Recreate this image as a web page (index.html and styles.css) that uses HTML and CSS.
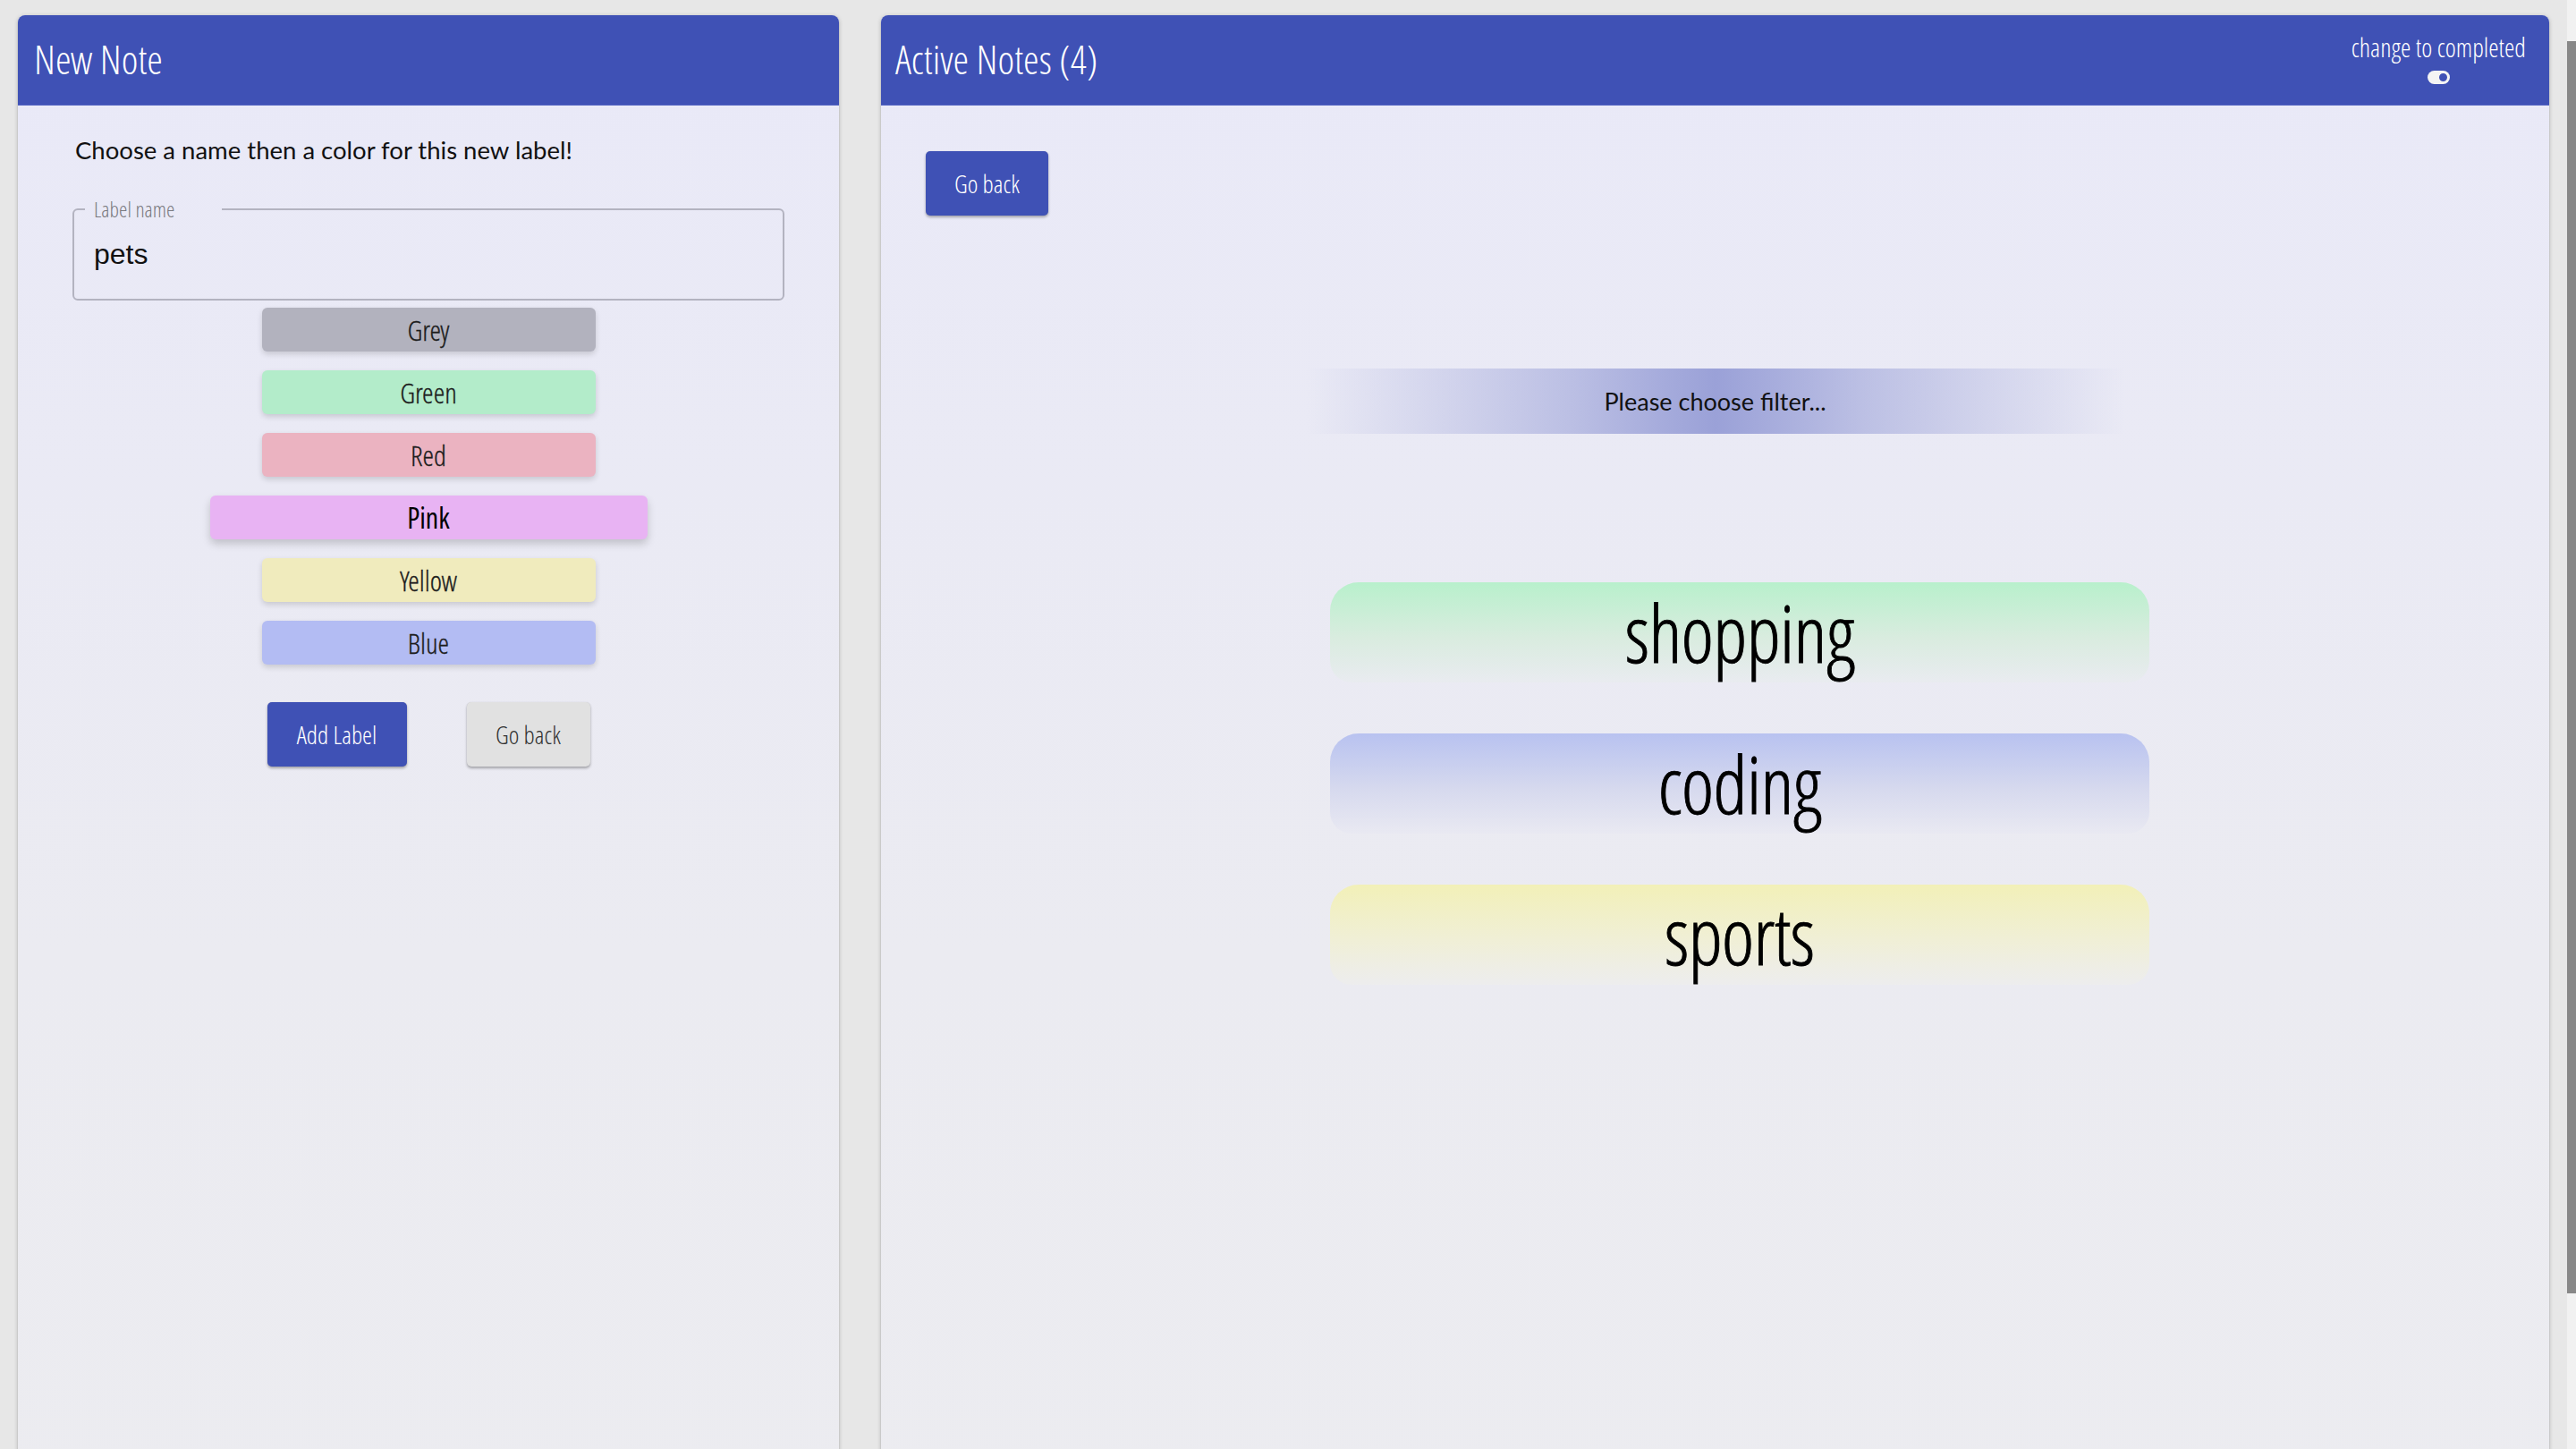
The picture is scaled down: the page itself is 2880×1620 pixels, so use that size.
FILE: index.html
```html
<!DOCTYPE html>
<html lang="en">
<head>
<meta charset="utf-8">
<title>Notes</title>
<link rel="stylesheet" href="styles.css">
</head>
<body>
<div class="screen">
  <div class="viewport">
    <div class="page">
      <section class="card card-left">
        <header class="card-head">
          <h1 class="card-title">New Note</h1>
        </header>
        <div class="left-body">
          <p class="intro">Choose a name then a color for this new label!</p>
          <fieldset class="field">
            <legend class="field-label">Label name</legend>
            <div class="field-value">pets</div>
          </fieldset>
          <div class="colors">
            <button class="color c-grey">Grey</button>
            <button class="color c-green">Green</button>
            <button class="color c-red">Red</button>
            <button class="color c-pink selected">Pink</button>
            <button class="color c-yellow">Yellow</button>
            <button class="color c-blue">Blue</button>
          </div>
          <div class="actions">
            <button class="btn btn-primary btn-add">Add Label</button>
            <button class="btn btn-light btn-back">Go back</button>
          </div>
        </div>
      </section>
      <section class="card card-right">
        <header class="card-head head-right">
          <h1 class="card-title">Active Notes (4)</h1>
          <div class="toggle-box">
            <span class="toggle-text">change to completed</span>
            <span class="switch"><span class="knob"></span></span>
          </div>
        </header>
        <div class="right-body">
          <button class="btn btn-primary btn-back2">Go back</button>
          <div class="filter">Please choose filter...</div>
          <ul class="labels">
            <li class="label l-green">shopping</li>
            <li class="label l-blue">coding</li>
            <li class="label l-yellow">sports</li>
          </ul>
        </div>
      </section>
    </div>
  </div>
  <div class="scrollbar">
    <div class="sb-track sb-start"></div>
    <div class="sb-thumb"></div>
    <div class="sb-track sb-end"></div>
  </div>
</div>
</body>
</html>
```

FILE: styles.css
```css
html, body {
  margin: 0;
  padding: 0;
  height: 100%;
  overflow: hidden;
}
body {
  background: #e7e7e7;
  font-family: "Lato", "Open Sans", sans-serif;
}
.screen {
  display: flex;
  height: 100vh;
}
.viewport {
  flex: 1;
  overflow: hidden;
}
.scrollbar {
  width: 10px;
  display: flex;
  flex-direction: column;
  background: #f1f1f1;
}
.sb-start { height: 46px; }
.sb-thumb { height: 1400px; background: #888888; }
.sb-end { flex: 1; }

.page {
  display: grid;
  grid-template-columns: 918px 1fr;
  column-gap: 47px;
  padding: 17px 20px 0 20px;
  height: 1768px;
  box-sizing: border-box;
}
.card {
  background: linear-gradient(#e9e9f8, #ebebf1 60%, #ececf0);
  border-radius: 8px 8px 0 0;
  box-shadow: 0 1px 5px rgba(0,0,0,0.22), 0 2px 2px rgba(0,0,0,0.12);
}
.card-title, .toggle-text, .field-label, .btn, .label, .color {
  font-family: "Open Sans Condensed Light", "Open Sans", sans-serif;
  font-stretch: 75%;
  font-weight: 300;
}
.card-head {
  height: 101px;
  background: #3f51b5;
  border-radius: 8px 8px 0 0;
  display: flex;
  align-items: center;
  padding: 0 18px;
  box-sizing: border-box;
  border-bottom: 1px solid #5566c2;
}
.card-title {
  margin: 0;
  color: #ffffff;
  font-size: 45px;
  line-height: 1.2;
  padding-bottom: 2px;
}
.head-right {
  justify-content: space-between;
  padding: 0 26px 0 16px;
}
.toggle-box {
  align-self: flex-start;
  margin-top: 19px;
  display: flex;
  flex-direction: column;
  align-items: center;
  gap: 9px;
}
.toggle-text {
  color: #ffffff;
  font-size: 29px;
  line-height: 34px;
}
.switch {
  width: 25px;
  height: 15px;
  border-radius: 8px;
  background: #f4f4f4;
  display: flex;
  justify-content: flex-end;
  align-items: center;
  padding: 0 1px;
  box-sizing: border-box;
}
.knob {
  width: 13px;
  height: 13px;
  border-radius: 50%;
  background: #3f51b5;
  border: 2px solid #f4f4f4;
  box-sizing: border-box;
}

/* left body */
.left-body {
  padding: 33px 61px 0 61px;
}
.intro {
  margin: 0 0 37px 3px;
  font-size: 27.5px;
  line-height: 33px;
  color: #111111;
}
.field {
  margin: 0;
  padding: 19px 22px 31px 22px;
  border: 2px solid #b3b3c0;
  border-radius: 6px;
}
.field-label {
  margin-left: -10px;
  padding: 0 10px;
  width: 153px;
  box-sizing: border-box;
  font-size: 24px;
  line-height: 26px;
  color: #7a7a80;
}
.field-value {
  font-family: "Liberation Sans", Arial, sans-serif;
  font-size: 32px;
  color: #111111;
}
.colors {
  margin-top: 8px;
  display: flex;
  flex-direction: column;
  align-items: center;
  gap: 21px;
}
.color {
  width: 373px;
  height: 49px;
  border: none;
  border-radius: 6px;
  font-size: 32px;
  color: #1c1c1c;
  padding: 0;
  line-height: 49px;
  -webkit-text-stroke: 0.3px #1c1c1c;
  box-shadow: 0 3px 6px rgba(0,0,0,0.15);
}
.color.selected {
  width: 489px;
  font-family: "Open Sans", sans-serif;
  font-stretch: 75%;
  font-weight: 400;
  color: #000000;
  -webkit-text-stroke: 0;
  box-shadow: 0 5px 10px rgba(0,0,0,0.18);
}
.c-grey { background: #b2b2be; }
.c-green { background: #b3ecca; }
.c-red { background: #ebb3c1; }
.c-pink { background: #e8b3f3; }
.c-yellow { background: #f0ebbd; }
.c-blue { background: #b3bcf3; }

.actions {
  margin-top: 42px;
  display: flex;
  justify-content: center;
  gap: 67px;
}
.btn {
  border: none;
  border-radius: 5px;
  font-size: 28px;
  padding: 0;
  box-shadow: 0 2px 3px rgba(0,0,0,0.3), 0 0 1px rgba(0,0,0,0.15);
}
.btn-primary {
  background: #3f51b5;
  color: #ffffff;
}
.btn-light {
  background: #e1e1e1;
  color: #333333;
}
.btn-add { width: 156px; height: 72px; }
.btn-back { width: 138px; height: 72px; }

/* right body */
.right-body {
  padding: 51px 50px 0 50px;
  display: flex;
  flex-direction: column;
}
.btn-back2 {
  width: 137px;
  height: 72px;
  align-self: flex-start;
}
.filter {
  margin-top: 171px;
  align-self: center;
  width: 914px;
  height: 73px;
  display: flex;
  align-items: center;
  justify-content: center;
  font-size: 27px;
  color: #111111;
  background: linear-gradient(90deg,
    rgba(150,157,214,0) 0%,
    rgba(150,157,214,0.1) 6%,
    rgba(150,157,214,0.3) 18%,
    rgba(150,157,214,0.55) 32%,
    rgba(150,157,214,0.8) 43%,
    rgba(150,157,214,0.95) 50%,
    rgba(150,157,214,0.8) 57%,
    rgba(150,157,214,0.55) 68%,
    rgba(150,157,214,0.3) 82%,
    rgba(150,157,214,0.1) 94%,
    rgba(150,157,214,0) 100%);
}
.labels {
  list-style: none;
  margin: 166px 0 0 0;
  padding: 0 0 0 54px;
  display: flex;
  flex-direction: column;
  align-items: center;
  gap: 57px;
}
.label {
  width: 916px;
  height: 112px;
  border-radius: 32px 32px 24px 24px;
  text-align: center;
  font-size: 88px;
  line-height: 112px;
  color: #000000;
  letter-spacing: -1px;
  -webkit-text-stroke: 0.8px #000000;
}
.l-green { background: linear-gradient(#b8f0cc, #d9ecdf 55%, rgba(232,236,238,0.6)); }
.l-blue { background: linear-gradient(#b8c2f0, #d6d9ee 55%, rgba(232,232,242,0.6)); }
.l-yellow { background: linear-gradient(#f2f0b8, #f0efd6 55%, rgba(238,238,236,0.6)); }
```
